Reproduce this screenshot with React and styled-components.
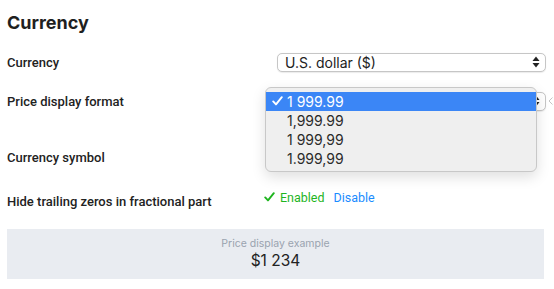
import React from "react";
import styled, { createGlobalStyle } from "styled-components";

const GlobalStyle = createGlobalStyle`
  html, body {
    margin: 0;
    padding: 0;
    background: #fff;
  }
  body {
    font-family: "Inter", "Liberation Sans", sans-serif;
    color: #222;
  }
`;

const formats = ["1 999.99", "1,999.99", "1 999,99", "1.999,99"];

function UpDownArrows() {
  return (
    <svg width="8" height="12" viewBox="0 0 8 12">
      <path d="M4 0.5 L7.5 5 L0.5 5 Z" fill="#222" />
      <path d="M4 11.5 L7.5 7 L0.5 7 Z" fill="#222" />
    </svg>
  );
}

function CheckMark({ color }) {
  return (
    <svg width="11" height="10" viewBox="0 0 11 10">
      <path
        d="M1.2 5.4 L4 8.4 L9.8 1.2"
        fill="none"
        stroke={color}
        strokeWidth="1.9"
        strokeLinecap="round"
        strokeLinejoin="round"
      />
    </svg>
  );
}

function App() {
  return (
    <>
      <GlobalStyle />
      <Page>
        <Title>Currency</Title>

        <Row h={38} top={6}>
          <Label>Currency</Label>
          <Control>
            <Select>
              <span>U.S. dollar ($)</span>
              <UpDownArrows />
            </Select>
          </Control>
        </Row>

        <Row h={38} top={1}>
          <Label>Price display format</Label>
          <Control>
            <Select>
              <span>1 999.99</span>
              <UpDownArrows />
            </Select>
            <Chevron>
              <svg width="5" height="8" viewBox="0 0 5 8">
                <path d="M4.5 0.5 L1 4 L4.5 7.5" fill="none" stroke="#c4c4c4" strokeWidth="1" />
              </svg>
            </Chevron>
            <Dropdown>
              {formats.map((f, i) => (
                <Option key={f} selected={i === 0}>
                  {i === 0 && (
                    <Tick>
                      <CheckMark color="#fff" />
                    </Tick>
                  )}
                  {f}
                </Option>
              ))}
            </Dropdown>
          </Control>
        </Row>

        <Row h={38} top={18}>
          <Label>Currency symbol</Label>
          <Control />
        </Row>

        <Row h={38} top={6}>
          <Label>Hide trailing zeros in fractional part</Label>
          <Toggle>
            <Enabled>
              <CheckMark color="#1fb51f" />
              Enabled
            </Enabled>
            <LinkButton>Disable</LinkButton>
          </Toggle>
        </Row>

        <Example>
          <ExampleCaption>Price display example</ExampleCaption>
          <ExampleValue>$1 234</ExampleValue>
        </Example>
      </Page>
    </>
  );
}

export default App;

const Page = styled.div`
  width: 554px;
  height: 289px;
  box-sizing: border-box;
  padding: 9px 10px 0 7px;
  overflow: hidden;
`;

const Title = styled.h2`
  margin: 0;
  font-size: 18px;
  line-height: 28px;
  font-weight: 700;
  color: #1f1f1f;
`;

const Row = styled.div`
  display: flex;
  align-items: center;
  height: ${(p) => p.h}px;
  margin-top: ${(p) => p.top}px;
`;

const Label = styled.div`
  width: 270px;
  flex-shrink: 0;
  font-family: "Roboto", "Inter", sans-serif;
  font-size: 13px;
  font-weight: 500;
  color: #222;
`;

const Control = styled.div`
  position: relative;
  display: flex;
  align-items: center;
  flex: 1;
`;

const Select = styled.div`
  display: flex;
  align-items: center;
  justify-content: space-between;
  width: 269px;
  height: 19px;
  box-sizing: border-box;
  padding: 0 5px 0 7px;
  border: 1px solid #c6c6c6;
  border-radius: 5px;
  background: #fff;
  font-size: 14px;
  color: #222;
  box-shadow: 0 0.5px 1px rgba(0, 0, 0, 0.08);
`;

const Chevron = styled.span`
  display: flex;
  margin-left: 2px;
`;

const Dropdown = styled.div`
  position: absolute;
  left: -12px;
  top: -5px;
  width: 272px;
  box-sizing: border-box;
  padding: 4px 0 3px;
  background: #efefef;
  border: 1px solid #c8c8c8;
  border-radius: 6px;
  box-shadow: 0 5px 14px rgba(0, 0, 0, 0.13);
  z-index: 2;
`;

const Option = styled.div`
  position: relative;
  height: 19px;
  line-height: 19px;
  padding-left: 21px;
  font-size: 14px;
  color: ${(p) => (p.selected ? "#fff" : "#2a2a2a")};
  background: ${(p) => (p.selected ? "#3b86f6" : "transparent")};
`;

const Tick = styled.span`
  position: absolute;
  left: 6px;
  top: 4px;
  display: flex;
`;

const Toggle = styled.div`
  display: flex;
  align-items: center;
  gap: 9px;
  margin: -8px 0 0 -13px;
  font-family: "Roboto", "Inter", sans-serif;
  font-size: 12.5px;
`;

const Enabled = styled.span`
  display: flex;
  align-items: center;
  gap: 5px;
  color: #1fb51f;
`;

const LinkButton = styled.span`
  color: #1a8cff;
  cursor: pointer;
`;

const Example = styled.div`
  margin-top: 9px;
  height: 50px;
  box-sizing: border-box;
  padding-top: 8px;
  background: #e9ecf1;
  text-align: center;
`;

const ExampleCaption = styled.div`
  font-size: 10.5px;
  line-height: 14px;
  color: #9aa3af;
`;

const ExampleValue = styled.div`
  font-size: 15.5px;
  line-height: 20px;
  color: #222;
`;
